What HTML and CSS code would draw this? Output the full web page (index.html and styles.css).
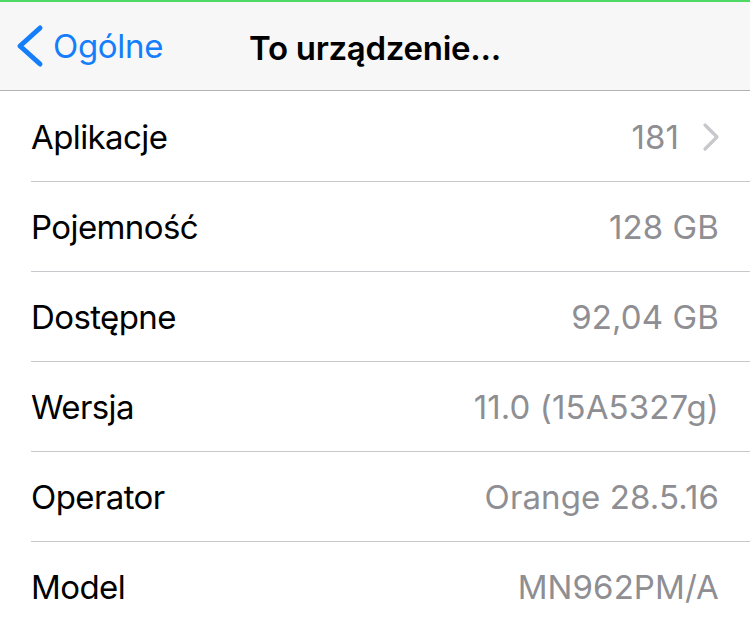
FILE: index.html
```html
<!DOCTYPE html>
<html lang="pl">
<head>
<meta charset="utf-8">
<link rel="stylesheet" href="styles.css">
</head>
<body>
<div class="status-line"></div>
<header class="nav">
  <a class="back">
    <svg class="chev" width="28" height="44" viewBox="0 0 28 44"><path d="M24 4 L4 22 L24 40" fill="none" stroke="#147efb" stroke-width="5" stroke-linecap="round" stroke-linejoin="round"/></svg>
    <span>Ogólne</span>
  </a>
  <h1 class="title">To urządzenie...</h1>
</header>
<ul class="list">
  <li class="row"><span class="label">Aplikacje</span><span class="value">181</span><svg class="disc" width="20" height="30" viewBox="0 0 20 30"><path d="M4 3 L16 15 L4 27" fill="none" stroke="#c7c7cc" stroke-width="3.2" stroke-linecap="round" stroke-linejoin="round"/></svg></li>
  <li class="row"><span class="label">Pojemność</span><span class="value">128 GB</span></li>
  <li class="row"><span class="label">Dostępne</span><span class="value">92,04 GB</span></li>
  <li class="row"><span class="label">Wersja</span><span class="value">11.0 (15A5327g)</span></li>
  <li class="row"><span class="label">Operator</span><span class="value">Orange 28.5.16</span></li>
  <li class="row"><span class="label">Model</span><span class="value">MN962PM/A</span></li>
</ul>
</body>
</html>
```
FILE: styles.css
```css
* { box-sizing: border-box; }
html, body { margin: 0; padding: 0; }
body {
  width: 750px;
  height: 631px;
  overflow: hidden;
  background: #fff;
  font-family: Inter, "Noto Sans", sans-serif;
  -webkit-font-smoothing: antialiased;
}
.status-line { height: 2px; background: #4cd964; }
.nav {
  height: 89px;
  background: #f7f7f7;
  border-bottom: 1px solid #b2b2b2;
  display: flex;
  align-items: center;
  justify-content: center;
  position: relative;
}
.back {
  position: absolute;
  left: 16px;
  top: 22px;
  display: flex;
  align-items: center;
  gap: 9px;
  color: #147efb;
  font-size: 33px;
  letter-spacing: -0.3px;
}
.title {
  margin: 0;
  font-size: 33px;
  font-weight: 600;
  color: #000;
  letter-spacing: -0.3px;
  position: relative;
  top: 2px;
}
.list { list-style: none; margin: 1px 0 0; padding: 0 0 0 31px; }
.row {
  height: 90px;
  display: flex;
  align-items: center;
  padding-right: 31px;
  border-bottom: 1px solid #c8c7cc;
  font-size: 33px;
}
.row:last-child { border-bottom: none; }
.label { color: #000; flex: 1; letter-spacing: -0.6px; }
.value { color: #8e8e93; letter-spacing: 0.1px; }
.disc { margin-left: 22px; margin-right: -2px; }
```
